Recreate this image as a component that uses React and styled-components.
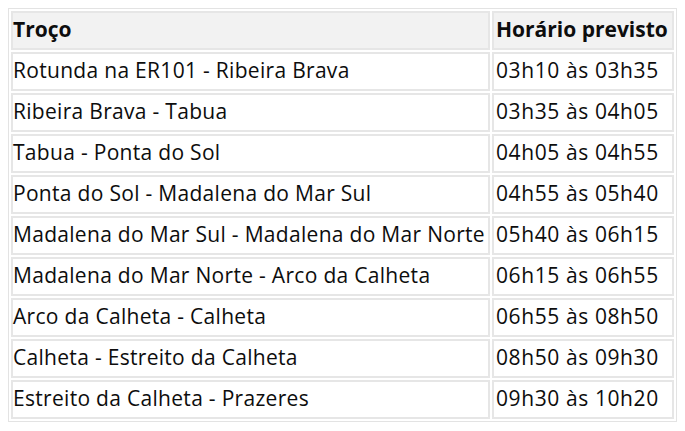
import React from "react";
import styled, { createGlobalStyle } from "styled-components";

const Global = createGlobalStyle`
  html, body { margin: 0; padding: 0; background: #ffffff; }
  body { font-family: "Open Sans", "Liberation Sans", Arial, sans-serif; }
`;

const Page = styled.div`
  padding: 8px 0 0 8px;
  width: 685px;
  height: 431px;
  box-sizing: border-box;
  background: #fff;
`;

const Table = styled.table`
  border-collapse: separate;
  border-spacing: 2px;
  border: 1px solid #e3e3e3;
  table-layout: fixed;
  width: 669px;
  font-family: "Open Sans", "Liberation Sans", Arial, sans-serif;
  font-size: 21px;
  color: #0d0d0d;
`;

const Cell = styled.td`
  box-sizing: border-box;
  border: 2px solid #e6e6e6;
  height: 39px;
  padding: 0 0 3px ${(p) => (p.$time ? "2px" : "0")};
  white-space: nowrap;
  overflow: visible;
  background: ${(p) => (p.$head ? "#f2f2f2" : "#ffffff")};
  font-weight: ${(p) => (p.$head ? 700 : 400)};
  letter-spacing: ${(p) => (p.$head ? "0" : p.$time ? "0.6px" : "0.3px")};
  vertical-align: middle;
  line-height: 1;
`;

const rows = [
  ["Rotunda na ER101 - Ribeira Brava", "03h10 às 03h35"],
  ["Ribeira Brava - Tabua", "03h35 às 04h05"],
  ["Tabua - Ponta do Sol", "04h05 às 04h55"],
  ["Ponta do Sol - Madalena do Mar Sul", "04h55 às 05h40"],
  ["Madalena do Mar Sul - Madalena do Mar Norte", "05h40 às 06h15"],
  ["Madalena do Mar Norte - Arco da Calheta", "06h15 às 06h55"],
  ["Arco da Calheta - Calheta", "06h55 às 08h50"],
  ["Calheta - Estreito da Calheta", "08h50 às 09h30"],
  ["Estreito da Calheta - Prazeres", "09h30 às 10h20"],
];

export default function App() {
  return (
    <Page>
      <Global />
      <Table>
        <colgroup>
          <col style={{ width: 479 }} />
          <col style={{ width: 182 }} />
        </colgroup>
        <tbody>
          <tr>
            <Cell $head>Troço</Cell>
            <Cell $head $time>Horário previsto</Cell>
          </tr>
          {rows.map(([a, b]) => (
            <tr key={a}>
              <Cell>{a}</Cell>
              <Cell $time>{b}</Cell>
            </tr>
          ))}
        </tbody>
      </Table>
    </Page>
  );
}
